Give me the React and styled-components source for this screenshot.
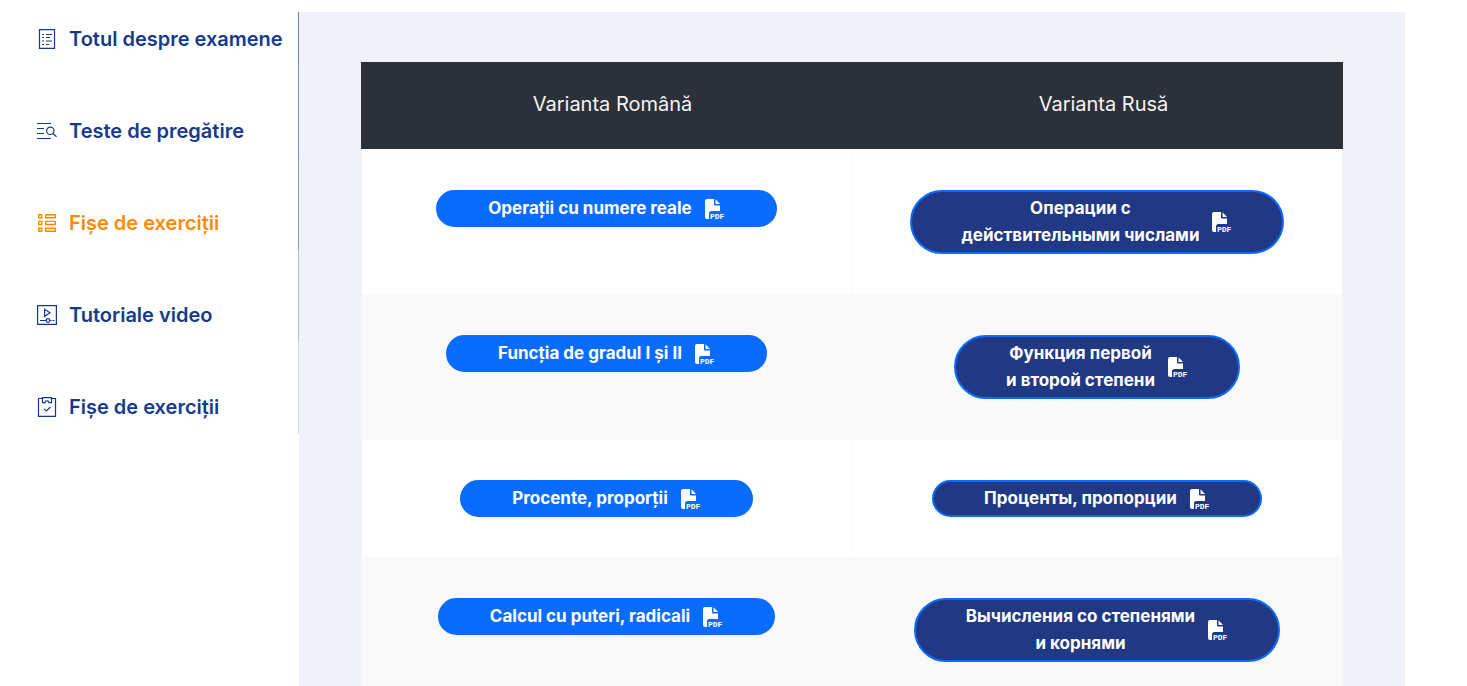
import React from "react";
import styled, { createGlobalStyle } from "styled-components";

const GlobalStyle = createGlobalStyle`
  *, *::before, *::after {
    box-sizing: border-box;
  }

  body {
    margin: 0;
    background: #fff;
    font-family: Inter, "Open Sans", sans-serif;
  }
`;

const Page = styled.div`
  display: flex;
  align-items: flex-start;
  padding: 12px 62px 0 0;
`;

const Sidebar = styled.nav`
  flex: 0 0 299px;
`;

const Menu = styled.ul`
  margin: 0;
  padding: 0;
  list-style: none;
`;

const MenuItem = styled.li`
  border-right: 1px solid ${(props) => props.$line};

  & + & {
    padding-top: 38px;
  }
`;

const MenuLink = styled.a`
  display: flex;
  align-items: center;
  gap: 12px;
  height: 54px;
  padding-left: 37px;
  color: ${(props) => (props.$active ? "#ff8a00" : "#163a8a")};
  font-size: 20px;
  font-weight: 600;
  line-height: 32px;
  white-space: nowrap;
  text-decoration: none;

  svg {
    flex: none;
  }
`;

const Content = styled.main`
  flex: 1;
  min-width: 0;
  padding: 50px 62px;
  background: #f0f2f8;
`;

const Table = styled.table`
  width: 100%;
  border-collapse: separate;
  border-spacing: 0;
  table-layout: fixed;
  background: #fff;
`;

const HeadCell = styled.th`
  height: 87px;
  padding: 0 0 4px 12px;
  background: #2c3039;
  color: #f4f4f4;
  font-size: 20px;
  font-weight: 400;
  line-height: 30px;
  text-align: center;
`;

const Row = styled.tr`
  &:nth-child(even) {
    background: #f9f9f9;
  }
`;

const Cell = styled.td`
  padding: 40px 0;
  border-top: 1px solid #f9f9f9;
  border-right: 1px solid #fafafa;
  text-align: center;
  vertical-align: top;

  &:first-child {
    border-left: 1px solid #f5f5f7;
  }

  &:last-child {
    border-right-color: #f5f5f7;
  }

  ${Row}:first-child & {
    border-top-color: #fff;
  }
`;

const PdfButton = styled.a`
  display: inline-flex;
  align-items: center;
  gap: 13px;
  padding: 3px 50px;
  border: 2px solid #0a6cff;
  border-radius: 32px;
  background: ${(props) => (props.$dark ? "#213885" : "#0a6cff")};
  color: #fff;
  font-size: 17px;
  font-weight: 700;
  line-height: 27px;
  text-decoration: none;
  vertical-align: top;

  svg {
    flex: none;
    overflow: visible;
  }
`;

const Label = styled.span`
  white-space: pre-line;
`;

const Icon = ({ children }) => (
  <svg
    width="20"
    height="20"
    viewBox="0 0 20 20"
    fill="none"
    stroke="currentColor"
    strokeWidth="1.2"
    aria-hidden="true"
  >
    {children}
  </svg>
);

const ExamIcon = () => (
  <Icon>
    <path d="M2.5 .6h15v18.8h-15z" />
    <path d="M5 5.5h2M9 5.5h6M5 8.5h2M9 8.5h4M5 12h2M9 12h6M5 15.5h2M9 15.5h3" />
  </Icon>
);

const SearchListIcon = () => (
  <Icon>
    <path d="M0 2.5h14M0 7.5h7M0 12.5h7M0 17.5h14" />
    <circle cx="13.3" cy="9.8" r="3.7" />
    <path d="M16 12.5l3.5 3.3" />
  </Icon>
);

const SheetIcon = () => (
  <Icon>
    <path
      strokeWidth="1.4"
      d="M1.7 1.7h3.1v3.1H1.7zM8.6 1.7h9.7v3.1H8.6zM1.7 8.4h3.1v3.1H1.7zM8.6 8.4h9.7v3.1H8.6zM1.7 15.2h3.1v3.1H1.7zM8.6 15.2h9.7v3.1H8.6z"
    />
  </Icon>
);

const VideoIcon = () => (
  <Icon>
    <path d="M.6.6h18.8v18.8H.6z" />
    <path d="M7.6 4.3v7L13 7.8z" />
    <path d="M3 15.5h6M13 15.5h1.5M15.5 15.5h2" />
    <circle cx="11" cy="15.5" r="1.8" />
  </Icon>
);

const ClipboardIcon = () => (
  <Icon>
    <path d="M5.5 1.5h-4v17.9h17V1.5h-4" />
    <path d="M5.5.6h9v5h-2.6c0-2.4-3.8-2.4-3.8 0H5.5z" />
    <path d="M7.2 11.8l2.2 2.2 4-4" />
  </Icon>
);

const PdfIcon = () => (
  <svg width="20" height="20" viewBox="0 0 20 20" fill="currentColor" aria-hidden="true">
    <path d="M2 0h7v5.5a1 1 0 0 0 1 1h5V12H6.5A2.5 2.5 0 0 0 4 14.5V20H2a2 2 0 0 1-2-2V2a2 2 0 0 1 2-2z" />
    <path d="M10.5.2L15 5h-4.5z" />
    <text
      x="5"
      y="20"
      fontFamily="Liberation Mono, monospace"
      fontSize="8"
      fontWeight="700"
    >
      PDF
    </text>
  </svg>
);

const menu = [
  { label: "Totul despre examene", icon: ExamIcon, line: "#6a82b6" },
  { label: "Teste de pregătire", icon: SearchListIcon, line: "#788dbd" },
  { label: "Fișe de exerciții", icon: SheetIcon, line: "#8b9dc6", active: true },
  { label: "Tutoriale video", icon: VideoIcon, line: "#b3bedb" },
  { label: "Fișe de exerciții", icon: ClipboardIcon, line: "#d5dbea" },
];

const sheets = [
  { ro: "Operații cu numere reale", ru: "Операции с\nдействительными числами" },
  { ro: "Funcția de gradul I și II", ru: "Функция первой\nи второй степени" },
  { ro: "Procente, proporții", ru: "Проценты, пропорции" },
  { ro: "Calcul cu puteri, radicali", ru: "Вычисления со степенями\nи корнями" },
];

function App() {
  return (
    <>
      <GlobalStyle />
      <Page>
        <Sidebar>
          <Menu>
            {menu.map(({ label, icon: ItemIcon, line, active }, index) => (
              <MenuItem key={index} $line={line}>
                <MenuLink href="#" $active={active}>
                  <ItemIcon />
                  {label}
                </MenuLink>
              </MenuItem>
            ))}
          </Menu>
        </Sidebar>
        <Content>
          <Table>
            <thead>
              <tr>
                <HeadCell scope="col">Varianta Română</HeadCell>
                <HeadCell scope="col">Varianta Rusă</HeadCell>
              </tr>
            </thead>
            <tbody>
              {sheets.map((sheet) => (
                <Row key={sheet.ro}>
                  <Cell>
                    <PdfButton href="#">
                      <Label>{sheet.ro}</Label>
                      <PdfIcon />
                    </PdfButton>
                  </Cell>
                  <Cell>
                    <PdfButton href="#" $dark>
                      <Label>{sheet.ru}</Label>
                      <PdfIcon />
                    </PdfButton>
                  </Cell>
                </Row>
              ))}
            </tbody>
          </Table>
        </Content>
      </Page>
    </>
  );
}

export default App;
